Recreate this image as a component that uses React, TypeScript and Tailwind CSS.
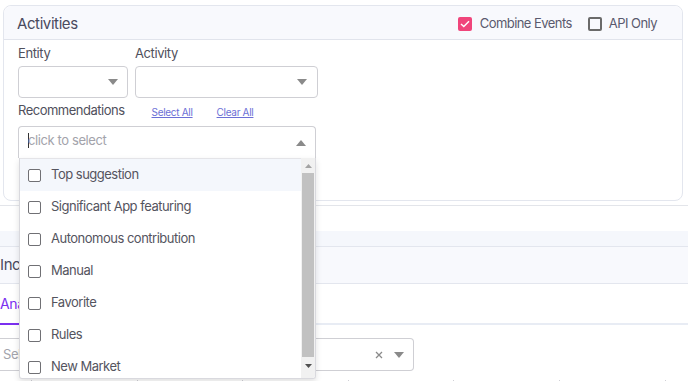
import React from "react";

const Caret = ({ up = false, color = "#8a8a8a" }: { up?: boolean; color?: string }) => (
  <svg width="10" height="6" viewBox="0 0 10 6" className="block">
    {up ? <path d="M0 6 L5 0 L10 6 Z" fill={color} /> : <path d="M0 0 L10 0 L5 6 Z" fill={color} />}
  </svg>
);

const items = [
  "Top suggestion",
  "Significant App featuring",
  "Autonomous contribution",
  "Manual",
  "Favorite",
  "Rules",
  "New Market",
];

export default function App() {
  return (
    <div className="relative w-[688px] h-[381px] overflow-hidden bg-white font-['Inter',sans-serif] text-[#50505c]">
      {/* Activities card */}
      <div className="pt-[5px] pl-[3px] pr-[5px]">
        <div className="relative h-[196px] rounded-[8px] border border-[#e3e6ee] bg-white">
          <div className="flex h-[34px] items-center justify-between rounded-t-[8px] border-b border-[#e1e4ec] bg-[#f8f9fd] pl-[13px] pr-[25px] pt-[3px]">
            <span className="text-[15px] tracking-[-0.4px] text-[#4a4a5e]">Activities</span>
            <div className="flex items-center text-[13px] tracking-[-0.55px] text-[#5a5a6e]">
              <span className="flex h-[14px] w-[14px] items-center justify-center rounded-[2px] bg-[#f0457b]">
                <svg width="10" height="8" viewBox="0 0 10 8">
                  <path d="M1 4 L3.8 6.6 L9 1.2" stroke="white" strokeWidth="1.4" fill="none" />
                </svg>
              </span>
              <span className="ml-[8px]">Combine Events</span>
              <span className="ml-[16px] h-[14px] w-[14px] rounded-[2px] border-2 border-[#6a6a6a]"></span>
              <span className="ml-[7px]">API Only</span>
            </div>
          </div>
          <div className="px-[14px]">
            <div className="flex pt-[4px]">
              <div className="w-[110px]">
                <div className="h-[18px] text-[13px] leading-[18px] tracking-[-0.4px]">Entity</div>
                <div className="mt-[4px] flex h-[32px] items-center justify-end rounded-[4px] border border-[#cfcfd4] pr-[9px]">
                  <Caret />
                </div>
              </div>
              <div className="ml-[7px] w-[183px]">
                <div className="h-[18px] text-[13px] leading-[18px] tracking-[-0.4px]">Activity</div>
                <div className="mt-[4px] flex h-[32px] items-center justify-end rounded-[4px] border border-[#cfcfd4] pr-[10px]">
                  <Caret />
                </div>
              </div>
            </div>
            <div className="mt-[4px] flex h-[18px] items-center">
              <span className="text-[13px] tracking-[-0.5px]">Recommendations</span>
              <span className="ml-[27px] mt-[3px] text-[10px] tracking-[-0.3px] text-[#6b6fd6] underline">Select All</span>
              <span className="ml-[24px] mt-[3px] text-[10px] tracking-[-0.3px] text-[#6b6fd6] underline">Clear All</span>
            </div>
            <div className="relative mt-[6px] w-[298px]">
              <div className="flex h-[32px] items-center justify-between rounded-t-[4px] border border-b-0 border-[#cfcfd4] pb-[4px] pl-[9px] pr-[9px]">
                <span className="flex items-center text-[13px] tracking-[-0.4px] text-[#a3a3ab]">
                  <span className="mr-[-1px] h-[15px] w-[1px] bg-[#333]"></span>
                  click to select
                </span>
                <span className="mt-[4px]">
                  <Caret up color="#8a8a8a" />
                </span>
              </div>
            </div>
          </div>
        </div>
      </div>

      {/* Lower section */}
      <div className="mt-[4px] h-[26px] border-t border-[#e3e5ea]"></div>
      <div className="h-[15px] bg-[#f5f7fc]"></div>
      <div className="flex h-[38px] items-center border-y border-[#e3e6ee] bg-[#f8f9fd]">
        <span className="text-[15px] tracking-[-0.4px] text-[#4a4a5e]">Incidents</span>
      </div>
      <div className="relative flex h-[41px] items-center border-b-2 border-[#e8ecf4]">
        <span className="text-[14px] tracking-[-0.4px] text-[#7b2ff0]">Analysis</span>
        <span className="absolute bottom-[-2px] left-0 h-[2px] w-[60px] bg-[#7b2ff0]"></span>
      </div>
      <div className="mt-[13px] flex h-[33px] w-[414px] items-center justify-between rounded-r-[4px] border border-l-0 border-[#cfcfd4] pl-[3px] pr-[9px]">
        <span className="text-[13px] tracking-[-0.4px] text-[#a3a3ab]">Select...</span>
        <span className="flex items-center gap-[11px]">
          <svg width="8" height="8" viewBox="0 0 8 8">
            <path d="M1 1 L7 7 M7 1 L1 7" stroke="#8a8a8a" strokeWidth="1.3" />
          </svg>
          <Caret />
        </span>
      </div>
      <div className="mt-[9px] flex h-[3px] pl-[31px]">
        {[0, 1, 2, 3, 4, 5, 6].map((i) => (
          <div key={i} className="w-[105.6px] shrink-0">
            <div className="h-[3px] w-[1px] bg-[#d0d0d6]"></div>
          </div>
        ))}
      </div>

      {/* Dropdown menu overlay */}
      <div className="absolute left-[19px] top-[158px] h-[221px] w-[297px] overflow-hidden rounded-b-[3px] border border-t-0 border-[#d9d9de] bg-white shadow-[0_3px_6px_rgba(0,0,0,0.12)]">
        <div className="flex h-full">
          <div className="flex-1 border-t border-[#e4e4e8]">
            {items.map((it, i) => (
              <div
                key={it}
                className={`flex h-[32px] items-center pl-[8px] text-[13px] tracking-[-0.5px] text-[#54545e] ${i === 0 ? "bg-[#f4f7fc]" : ""}`}
              >
                <span className="h-[13px] w-[13px] rounded-[2px] border border-[#707074] bg-white"></span>
                <span className="ml-[10px]">{it}</span>
              </div>
            ))}
          </div>
          <div className="flex w-[14px] flex-col bg-[#f1f1f1]">
            <div className="flex h-[15px] items-center justify-center">
              <svg width="7" height="4" viewBox="0 0 7 4"><path d="M0 4 L3.5 0 L7 4 Z" fill="#a3a3a3" /></svg>
            </div>
            <div className="mx-[1px] h-[184px] bg-[#c1c1c1]"></div>
            <div className="flex h-[17px] items-center justify-center">
              <svg width="7" height="4" viewBox="0 0 7 4"><path d="M0 0 L7 0 L3.5 4 Z" fill="#505050" /></svg>
            </div>
          </div>
        </div>
      </div>
    </div>
  );
}
